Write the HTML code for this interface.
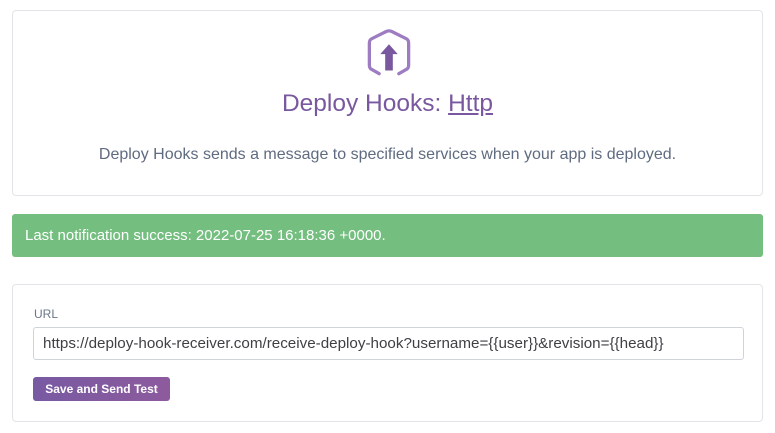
<!DOCTYPE html>
<html><head><style>
body{margin:0;background:#fff;font-family:"Liberation Sans",sans-serif;width:775px;height:433px;position:relative;overflow:hidden}
.card{position:absolute;left:12px;width:749px;border:1px solid #e3e4e8;border-radius:4px;background:#fff}
</style></head><body>
<div class="card" style="top:10px;height:184px">
<svg style="position:absolute;left:352px;top:18px" width="48" height="48" viewBox="0 0 44 44">
<path d="M13 40 L6 36 Q4 35 4 32 V12 Q4 9 6 8 L19 1.5 Q22 0 25 1.5 L38 8 Q40 9 40 12 V32 Q40 35 38 36 L31 40" fill="none" stroke="#9e7cc1" stroke-width="3" stroke-linecap="round" transform="translate(0,1)"/>
<path d="M22 14 L30 23 H25.5 V38 H18.5 V23 H14 Z" fill="#79589f"/>
</svg>
<div style="position:absolute;top:79px;width:100%;text-align:center;font-size:24.5px;color:#79589f">Deploy Hooks: <span style="text-decoration:underline">Http</span></div>
<div style="position:absolute;top:135px;width:100%;text-align:center;font-size:16px;color:#5f6b80">Deploy Hooks sends a message to specified services when your app is deployed.</div>
</div>
<div style="position:absolute;left:12px;top:214px;width:751px;height:43px;background:#74be7f;border-radius:3px;color:#fff;font-size:15px;line-height:43px;padding-left:13px;box-sizing:border-box">Last notification success: 2022-07-25 16:18:36 +0000.</div>
<div class="card" style="top:284px;height:136px">
<div style="position:absolute;left:21px;top:22px;font-size:12px;color:#6c7589">URL</div>
<div style="position:absolute;left:20px;top:42px;border:1px solid #cfd3da;border-radius:3px;font-size:15.2px;color:#3f3f44;line-height:31px;padding-left:9px;box-sizing:border-box;width:711px;height:33px">https://deploy-hook-receiver.com/receive-deploy-hook?username={{user}}&amp;revision={{head}}</div>
<div style="position:absolute;left:20px;top:92px;width:137px;height:24px;border-radius:3px;background:linear-gradient(90deg,#785aa2,#8d5a9d);color:#fff;font-weight:bold;font-size:12px;line-height:24px;text-align:center">Save and Send Test</div>
</div>
</body></html>
